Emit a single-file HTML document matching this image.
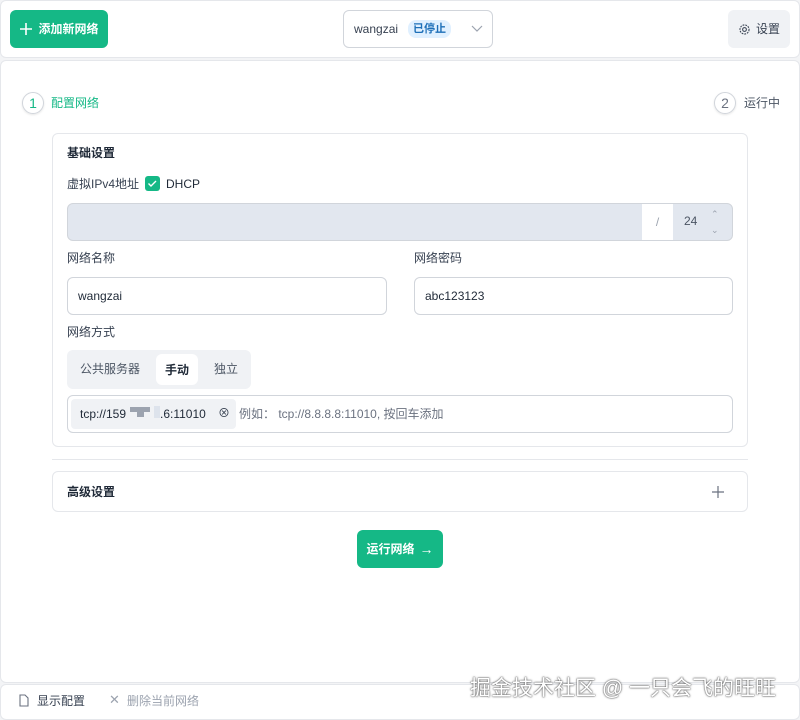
<!DOCTYPE html>
<html><head><meta charset="utf-8"><style>
*{box-sizing:border-box;margin:0;padding:0}
body{width:800px;height:720px;background:#f3f4f6;font-family:"Liberation Sans","Noto Sans CJK SC",sans-serif;font-size:12px;line-height:14px;color:#374151;position:relative;overflow:hidden}
.a{position:absolute}
.card{background:#fff;border:1px solid #e5e7eb;border-radius:6px}
.green{background:#15b886;color:#fff;border-radius:6px;font-weight:bold}
.inp{background:#fff;border:1px solid #d1d5db;border-radius:6px;padding-left:10px;display:flex;align-items:center;font-size:12px;color:#1f2937}
.circ{width:22px;height:22px;border-radius:50%;border:1px solid #d1d5db;display:flex;align-items:center;justify-content:center;font-size:14px;box-shadow:0 1px 2px rgba(0,0,0,.1)}
</style></head><body>
<div class="a card" style="left:0;top:0;width:800px;height:58px;border-radius:6px"></div>
<div class="a green" style="left:10px;top:10px;width:98px;height:38px;display:flex;align-items:center;justify-content:center;font-size:12px">
<svg width="14" height="14" viewBox="0 0 14 14" style="margin-right:5px"><path d="M7 1v12M1 7h12" stroke="#fff" stroke-width="1.6"/></svg>添加新网络</div>
<div class="a" style="left:343px;top:10px;width:150px;height:38px;border:1px solid #d1d5db;border-radius:6px;background:#fff;display:flex;align-items:center;padding-left:10px;font-size:12px;color:#374151">wangzai<span style="margin-left:10px;background:#e0f0ff;color:#1d6fb8;font-size:11px;padding:2px 5px;border-radius:8px;font-weight:bold">已停止</span>
<svg class="a" style="left:127px;top:14px" width="12" height="8" viewBox="0 0 12 8"><path d="M1 1l5 5 5-5" stroke="#9ca3af" fill="none" stroke-width="1.2"/></svg></div>
<div class="a" style="left:728px;top:10px;width:62px;height:38px;background:#f0f2f5;border-radius:6px;display:flex;align-items:center;justify-content:center;font-size:12px;color:#374151">
<svg width="13" height="13" viewBox="0 0 16 16" style="margin-right:5px"><circle cx="8" cy="8" r="2.3" fill="none" stroke="#374151" stroke-width="1.3"/><circle cx="8" cy="8" r="5.6" fill="none" stroke="#374151" stroke-width="1.3" stroke-dasharray="2.2 1.2"/></svg>设置</div>

<div class="a card" style="left:0;top:60px;width:800px;height:623px;border-radius:6px"></div>
<div class="a circ" style="left:22px;top:92px;color:#15b886">1</div>
<div class="a" style="left:51px;top:96px;color:#15b886;font-size:12px">配置网络</div>
<div class="a circ" style="left:714px;top:92px;color:#6b7280">2</div>
<div class="a" style="left:744px;top:96px;color:#4b5563">运行中</div>

<div class="a card" style="left:52px;top:133px;width:696px;height:314px"></div>
<div class="a" style="left:67px;top:146px;font-weight:bold;color:#1f2937">基础设置</div>
<div class="a" style="left:67px;top:177px;color:#374151">虚拟IPv4地址</div>
<div class="a" style="left:145px;top:176px;width:15px;height:15px;background:#15b886;border-radius:3px"><svg width="15" height="15" viewBox="0 0 15 15"><path d="M3.5 7.5l2.5 2.5 5-5" stroke="#fff" fill="none" stroke-width="1.4"/></svg></div>
<div class="a" style="left:166px;top:177px;color:#1f2937">DHCP</div>
<div class="a" style="left:67px;top:203px;width:666px;height:38px;background:#e2e7ef;border:1px solid #d1d5db;border-radius:6px"></div>
<div class="a" style="left:642px;top:204px;width:31px;height:36px;background:#fff;color:#9ca3af;display:flex;align-items:center;justify-content:center">/</div>
<div class="a" style="left:684px;top:214px;color:#4b5563">24</div>
<div class="a" style="left:711px;top:207px;color:#9ca3af;font-size:9px">⌃</div>
<div class="a" style="left:711px;top:223px;color:#9ca3af;font-size:9px">⌄</div>

<div class="a" style="left:67px;top:251px">网络名称</div>
<div class="a inp" style="left:67px;top:277px;width:320px;height:38px">wangzai</div>
<div class="a" style="left:414px;top:251px">网络密码</div>
<div class="a inp" style="left:414px;top:277px;width:319px;height:38px">abc123123</div>
<div class="a" style="left:67px;top:325px">网络方式</div>
<div class="a" style="left:67px;top:350px;width:184px;height:39px;background:#f0f2f5;border-radius:6px"></div>
<div class="a" style="left:80px;top:362px;color:#4b5563">公共服务器</div>
<div class="a" style="left:156px;top:354px;width:42px;height:31px;background:#fff;border-radius:6px;display:flex;align-items:center;justify-content:center;color:#1f2937;font-weight:bold">手动</div>
<div class="a" style="left:214px;top:362px;color:#4b5563">独立</div>
<div class="a" style="left:67px;top:395px;width:666px;height:38px;border:1px solid #d1d5db;border-radius:6px;background:#fff"></div>
<div class="a" style="left:71px;top:399px;width:165px;height:30px;background:#f0f2f5;border-radius:4px"></div>
<div class="a" style="left:80px;top:407px;color:#1f2937">tcp://159</div>
<div class="a" style="left:130px;top:407px;width:20px;height:5px;background:#9ca3af"></div>
<div class="a" style="left:137px;top:410px;width:7px;height:7px;background:#9ca3af"></div>
<div class="a" style="left:154px;top:406px;width:6px;height:12px;background:#dde3ec"></div>
<div class="a" style="left:160px;top:407px;color:#1f2937">.6:11010</div>
<div class="a" style="left:218px;top:406px;font-size:12px;color:#374151">⊗</div>
<div class="a" style="left:239px;top:407px;color:#6b7280">例如： tcp://8.8.8.8:11010, 按回车添加</div>

<div class="a" style="left:52px;top:459px;width:696px;height:1px;background:#e5e7eb"></div>
<div class="a card" style="left:52px;top:471px;width:696px;height:41px"></div>
<div class="a" style="left:67px;top:485px;font-weight:bold;color:#1f2937">高级设置</div>
<svg class="a" style="left:711px;top:485px" width="14" height="14" viewBox="0 0 14 14"><path d="M7 1v12M1 7h12" stroke="#6b7280" stroke-width="1.2"/></svg>
<div class="a green" style="left:357px;top:530px;width:86px;height:38px;display:flex;align-items:center;justify-content:center">运行网络 <span style="margin-left:5px;font-size:14px">→</span></div>

<div class="a card" style="left:0;top:684px;width:800px;height:36px;border-radius:6px"></div>
<svg class="a" style="left:18px;top:694px" width="12" height="13" viewBox="0 0 12 13"><path d="M2 1h5l3 3v8H2z" fill="none" stroke="#6b7280" stroke-width="1.1"/></svg>
<div class="a" style="left:37px;top:694px;color:#374151">显示配置</div>
<div class="a" style="left:109px;top:693px;color:#9ca3af;font-size:13px">✕</div>
<div class="a" style="left:127px;top:694px;color:#9ca3af">删除当前网络</div>
<div class="a" style="left:470px;top:677px;font-size:21px;line-height:24px;color:#fff;text-shadow:0 0 2px #555,0 0 1px #333">掘金技术社区 @ 一只会飞的旺旺</div>
</body></html>
